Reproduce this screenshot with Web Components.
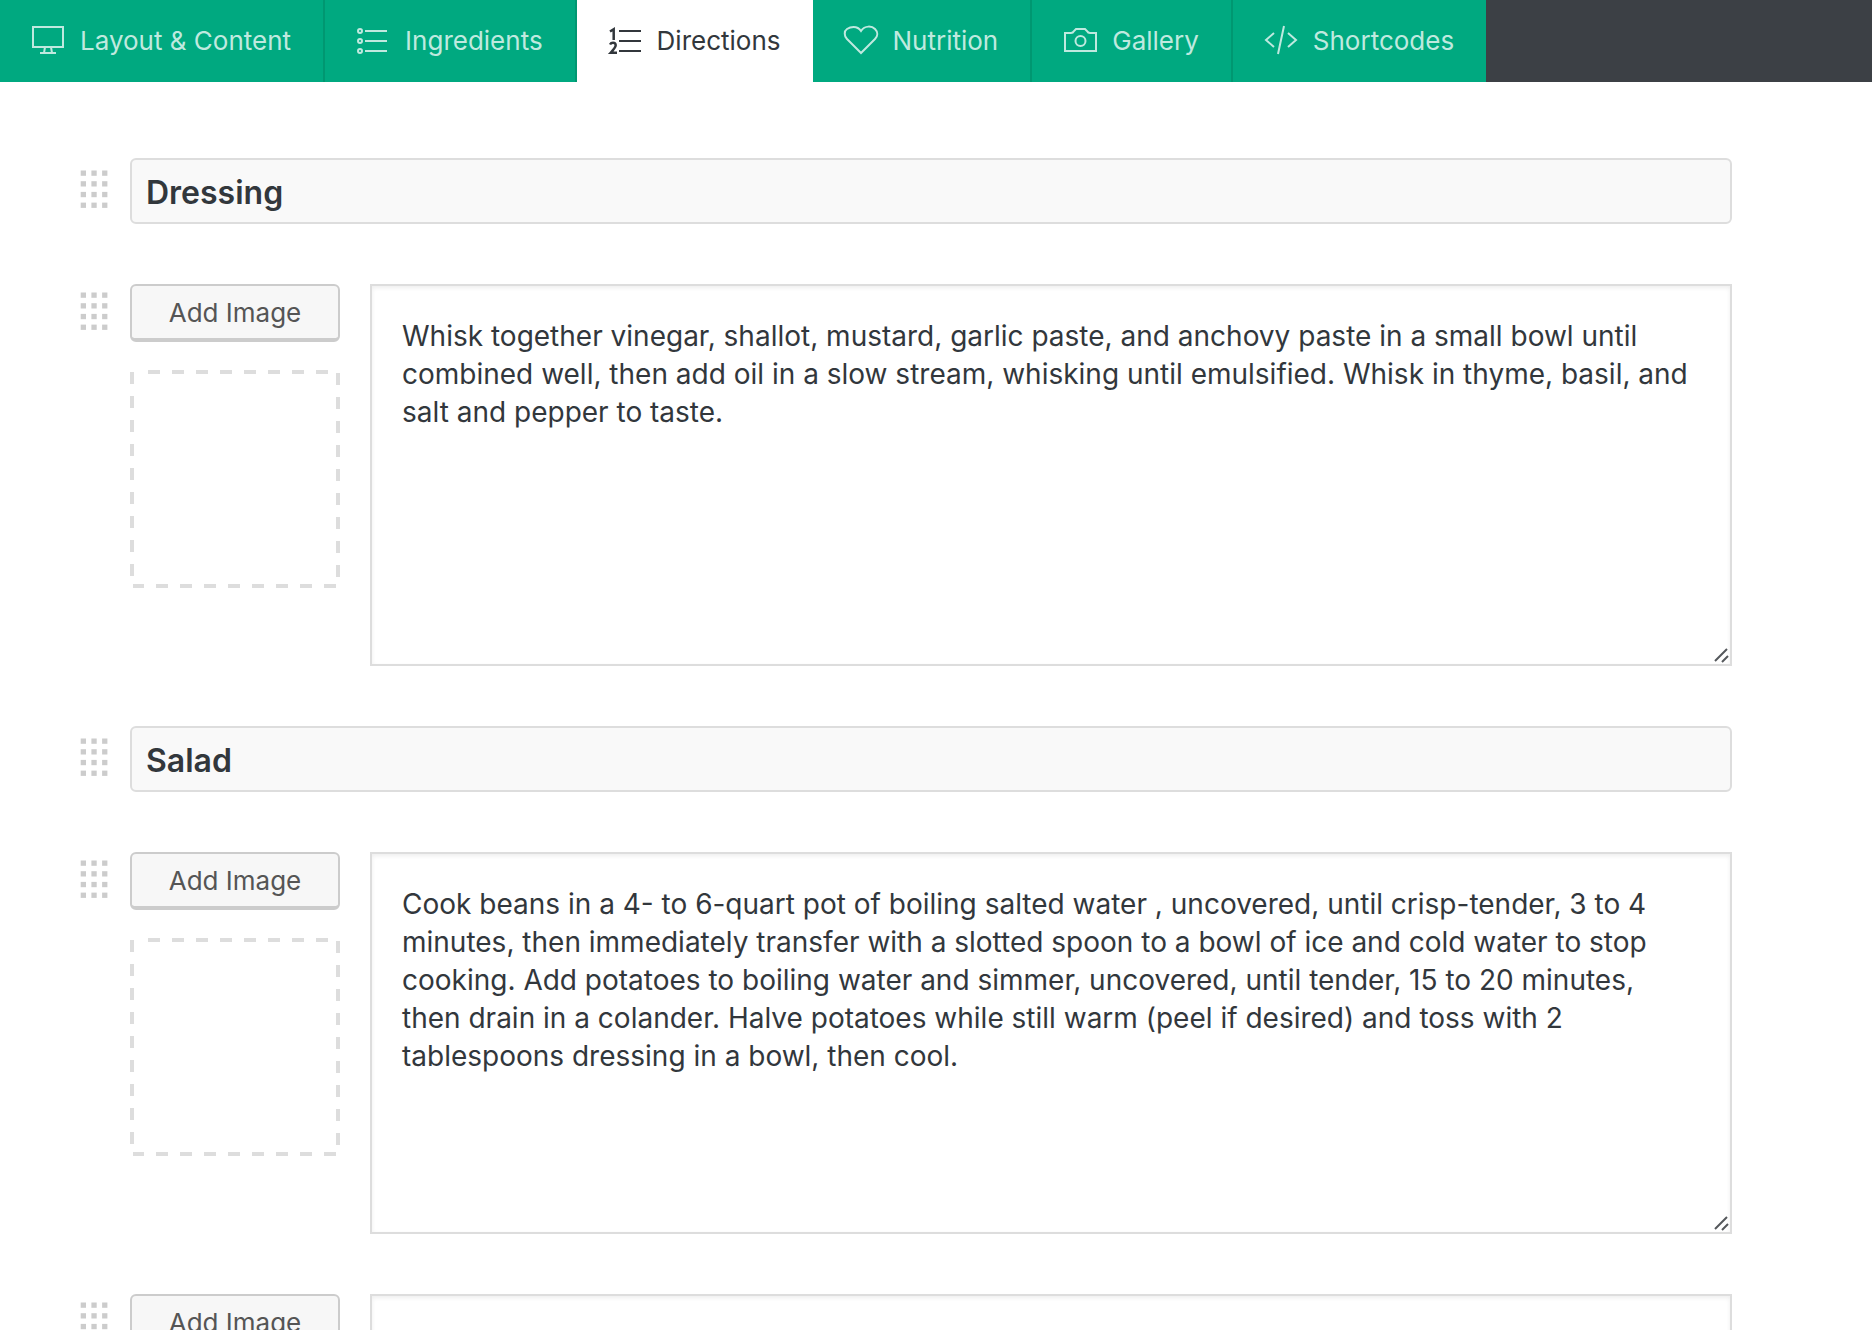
<!DOCTYPE html>
<html lang="en">
<head>
<meta charset="utf-8">
<title>Edit Recipe - Directions</title>
<style>
  body {
    margin: 0;
    background: #fff;
    color: #32373c;
    font-family: Inter, "Liberation Sans", sans-serif;
    font-size: 26px;
  }
</style>
</head>
<body>
<recipe-editor>
  <recipe-tab slot="tabs" icon="monitor">Layout &amp; Content</recipe-tab>
  <recipe-tab slot="tabs" icon="list">Ingredients</recipe-tab>
  <recipe-tab slot="tabs" icon="numbered" active>Directions</recipe-tab>
  <recipe-tab slot="tabs" icon="heart">Nutrition</recipe-tab>
  <recipe-tab slot="tabs" icon="camera">Gallery</recipe-tab>
  <recipe-tab slot="tabs" icon="code">Shortcodes</recipe-tab>

  <direction-heading value="Dressing"></direction-heading>
  <direction-step>Whisk together vinegar, shallot, mustard, garlic paste, and anchovy paste in a small bowl until combined well, then add oil in a slow stream, whisking until emulsified. Whisk in thyme, basil, and salt and pepper to taste.</direction-step>
  <direction-heading value="Salad"></direction-heading>
  <direction-step>Cook beans in a 4- to 6-quart pot of boiling salted water , uncovered, until crisp-tender, 3 to 4 minutes, then immediately transfer with a slotted spoon to a bowl of ice and cold water to stop cooking. Add potatoes to boiling water and simmer, uncovered, until tender, 15 to 20 minutes, then drain in a colander. Halve potatoes while still warm (peel if desired) and toss with 2 tablespoons dressing in a bowl, then cool.</direction-step>
  <direction-step></direction-step>
</recipe-editor>

<script>
// Line icons used in the tab bar
const ICONS = {
  monitor: '<path d="M1 3h30v20H1zM13 23l-1 6M19 23l1 6M8 29h16"/>',
  list: '<circle cx="3" cy="7" r="2"/><circle cx="3" cy="17" r="2"/><circle cx="3" cy="27" r="2"/><path d="M8 7h22M8 17h22M8 27h22"/>',
  numbered: '<path d="M10 7h22M10 17h22M10 27h22"/><path stroke-width="2.5" d="M1 7.500l3.700-2.300V16M1 20.500q1-1.800 3-1.800 2.700 0 2.700 2.600 0 2-5 7.500H8"/>',
  heart: '<path d="M16 29L2 15C-1 12-1 7 2 5S12 1 16 7C20 1 27 2 30 5s3 7 0 10z"/>',
  camera: '<path d="M1 9h6q2 0 3-2l2-2h9l2 2q1 2 3 2h6v18H1z"/><circle cx="16.500" cy="17" r="5"/>',
  code: '<path d="M9 9L1 16l8 7M23 9l8 7-8 7M19 2l-6 28"/>'
};

class RecipeTab extends HTMLElement {
  constructor() {
    super();
    this.attachShadow({ mode: 'open' });
  }

  connectedCallback() {
    const active = this.hasAttribute('active');
    this.shadowRoot.innerHTML = `
      <style>
        :host {
          display: block;
          flex: none;
          border-right: 2px solid #009771;
        }

        :host([active]),
        :host(:last-of-type) {
          border-right: none;
        }

        button {
          display: flex;
          align-items: center;
          gap: 16px;
          height: 82px;
          margin: 0;
          padding: 0 32px;
          border: none;
          background: #00a980;
          color: #bfe9df;
          font: inherit;
          line-height: 32px;
          white-space: nowrap;
          cursor: pointer;
        }

        :host([active]) button {
          background: #fff;
          color: #32373c;
        }

        svg {
          flex: none;
          width: 32px;
          height: 34px;
          fill: none;
          stroke: currentColor;
          stroke-width: 2;
          overflow: visible;
        }
      </style>
      <button type="button" role="tab" aria-selected="${active}">
        <svg viewBox="0 0 32 34" aria-hidden="true">${ICONS[this.getAttribute('icon')]}</svg>
        <slot></slot>
      </button>
    `;
  }
}

// 3 x 4 grid of dots for dragging a row
class DragHandle extends HTMLElement {
  constructor() {
    super();
    this.attachShadow({ mode: 'open' });
  }

  connectedCallback() {
    let dots = '';
    for (let row = 0; row < 4; row++) {
      for (let col = 0; col < 3; col++) {
        dots += `<rect x="${0.7 + col * 10.7}" y="${0.5 + row * 10.7}" width="5.3" height="5.3"/>`;
      }
    }
    this.shadowRoot.innerHTML = `
      <style>
        :host { display: block; cursor: move; }
        svg { display: block; width: 30px; height: 38px; fill: #ccc; }
      </style>
      <svg viewBox="0 0 30 38" aria-hidden="true">${dots}</svg>
    `;
  }
}

class DirectionHeading extends HTMLElement {
  constructor() {
    super();
    this.attachShadow({ mode: 'open' });
  }

  connectedCallback() {
    this.shadowRoot.innerHTML = `
      <style>
        :host {
          display: grid;
          grid-template-columns: 50px 1fr;
        }

        drag-handle { margin-top: 12px; }

        input {
          box-sizing: border-box;
          width: 100%;
          height: 66px;
          margin: 0;
          padding: 2px 14px 0;
          border: 2px solid #ddd;
          border-radius: 6px;
          background: #f9f9f9;
          color: inherit;
          font: inherit;
          font-size: 32px;
          font-weight: 600;
          outline: none;
        }
      </style>
      <drag-handle></drag-handle>
      <input type="text" aria-label="Section heading">
    `;
    this.shadowRoot.querySelector('input').value = this.getAttribute('value') || '';
  }
}

class DirectionStep extends HTMLElement {
  constructor() {
    super();
    this.attachShadow({ mode: 'open' });
  }

  connectedCallback() {
    this.shadowRoot.innerHTML = `
      <style>
        :host {
          display: grid;
          grid-template-columns: 50px 210px 1fr;
          align-items: start;
        }

        drag-handle { margin-top: 8px; }

        .image {
          display: flex;
          flex-direction: column;
          gap: 28px;
        }

        button {
          height: 58px;
          margin: 0;
          padding: 0;
          border: 2px solid #ccc;
          border-bottom-width: 4px;
          border-radius: 6px;
          background: #f7f7f7;
          color: #555;
          font: inherit;
          cursor: pointer;
        }

        .drop {
          display: block;
          width: 210px;
          height: 218px;
          fill: none;
          stroke: #ddd;
          stroke-width: 4;
          stroke-dasharray: 12 12;
        }

        .text {
          position: relative;
          display: flex;
          margin-left: 30px;
        }

        textarea {
          box-sizing: border-box;
          width: 100%;
          height: 382px;
          margin: 0;
          padding: 31px 30px;
          border: 2px solid #ddd;
          border-radius: 0;
          background: #fff;
          box-shadow: inset 0 2px 4px rgba(0, 0, 0, 0.07);
          color: inherit;
          font: inherit;
          font-size: 28px;
          line-height: 38px;
          resize: vertical;
          outline: none;
        }

        textarea::-webkit-resizer { background: transparent; }

        /* Resize grip over the corner of the textarea */
        .grip {
          position: absolute;
          right: 3px;
          bottom: 3px;
          width: 16px;
          height: 16px;
          fill: none;
          stroke: #55585c;
          stroke-width: 2;
          pointer-events: none;
        }
      </style>
      <drag-handle></drag-handle>
      <div class="image">
        <button type="button">Add Image</button>
        <svg class="drop" viewBox="0 0 210 218" aria-hidden="true">
          <path d="M18 2H200"/><path d="M208 3V208"/><path d="M2 2V206"/><path d="M206 216H3"/>
        </svg>
      </div>
      <div class="text">
        <textarea aria-label="Direction" spellcheck="false"></textarea>
        <svg class="grip" viewBox="0 0 16 16" aria-hidden="true"><path d="M2 14L14 2M9 15L15 9"/></svg>
      </div>
    `;
    this.shadowRoot.querySelector('textarea').value = this.textContent.trim();
  }
}

class RecipeEditor extends HTMLElement {
  constructor() {
    super();
    this.attachShadow({ mode: 'open' });
  }

  connectedCallback() {
    this.shadowRoot.innerHTML = `
      <style>
        :host {
          display: flex;
          flex-direction: column;
          height: 100vh;
        }

        nav {
          display: flex;
          flex: none;
          background: #3c4045;
        }

        main {
          display: flex;
          flex-direction: column;
          flex: 1;
          gap: 60px;
          min-height: 0;
          box-sizing: border-box;
          padding: 76px 140px 60px 80px;
          overflow-y: auto;
          scrollbar-width: none;
        }

        ::slotted(direction-heading),
        ::slotted(direction-step) {
          flex: none;
        }
      </style>
      <nav role="tablist"><slot name="tabs"></slot></nav>
      <main><slot></slot></main>
    `;
  }
}

customElements.define('drag-handle', DragHandle);
customElements.define('recipe-tab', RecipeTab);
customElements.define('direction-heading', DirectionHeading);
customElements.define('direction-step', DirectionStep);
customElements.define('recipe-editor', RecipeEditor);
</script>
</body>
</html>
